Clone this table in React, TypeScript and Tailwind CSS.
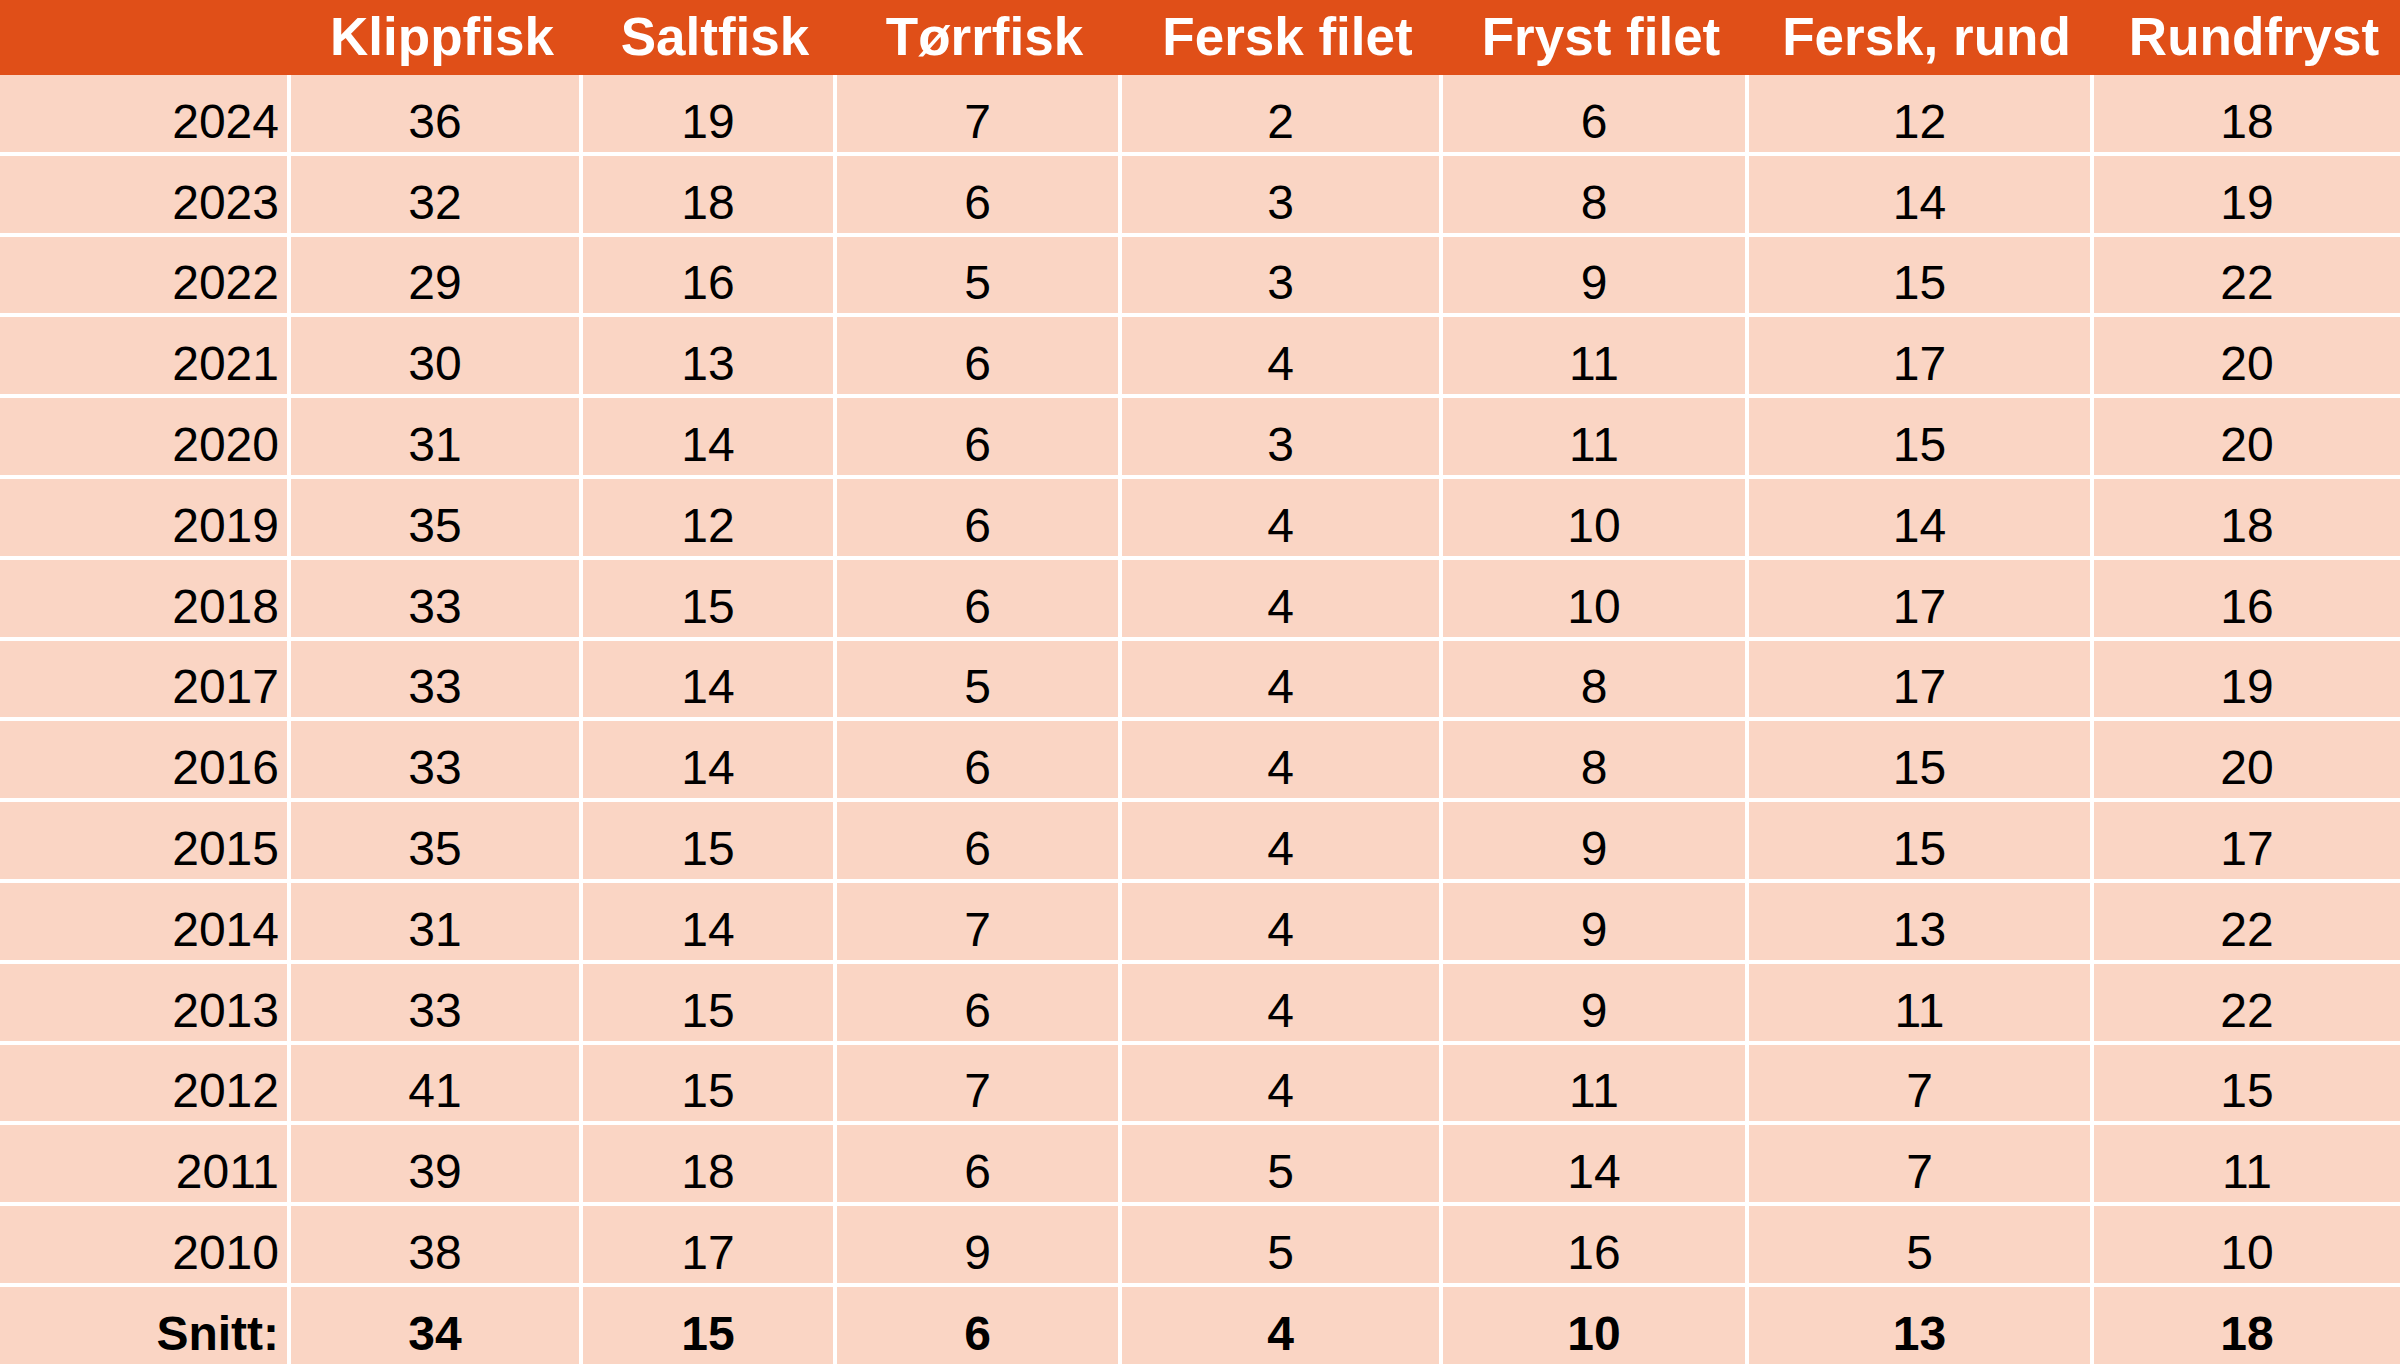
import React from 'react';

const columns = ['Klippfisk', 'Saltfisk', 'Tørrfisk', 'Fersk filet', 'Fryst filet', 'Fersk, rund', 'Rundfryst'];

const rows: [string, number[]][] = [
  ['2024', [36, 19, 7, 2, 6, 12, 18]],
  ['2023', [32, 18, 6, 3, 8, 14, 19]],
  ['2022', [29, 16, 5, 3, 9, 15, 22]],
  ['2021', [30, 13, 6, 4, 11, 17, 20]],
  ['2020', [31, 14, 6, 3, 11, 15, 20]],
  ['2019', [35, 12, 6, 4, 10, 14, 18]],
  ['2018', [33, 15, 6, 4, 10, 17, 16]],
  ['2017', [33, 14, 5, 4, 8, 17, 19]],
  ['2016', [33, 14, 6, 4, 8, 15, 20]],
  ['2015', [35, 15, 6, 4, 9, 15, 17]],
  ['2014', [31, 14, 7, 4, 9, 13, 22]],
  ['2013', [33, 15, 6, 4, 9, 11, 22]],
  ['2012', [41, 15, 7, 4, 11, 7, 15]],
  ['2011', [39, 18, 6, 5, 14, 7, 11]],
  ['2010', [38, 17, 9, 5, 16, 5, 10]],
];

const average = [34, 15, 6, 4, 10, 13, 18];

const gridCols = 'grid grid-cols-[287px_288px_250px_281px_317px_302px_341px_1fr] gap-x-[4px]';

const Row: React.FC<{ label: string; values: (number | string)[]; bold?: boolean }> = ({ label, values, bold }) => (
  <div className={`${gridCols} h-[76.8px] ${bold ? 'font-bold' : ''}`}>
    <div className="bg-[#fad5c4] flex items-end justify-end pr-[8px] pb-[6px] leading-[48px]">{label}</div>
    {values.map((v, i) => (
      <div key={i} className="bg-[#fad5c4] flex items-end justify-center pb-[6px] leading-[48px]">
        {v}
      </div>
    ))}
  </div>
);

export default function App() {
  return (
    <div className="w-[2400px] h-[1368px] overflow-hidden bg-white text-black text-[48px] font-['Liberation_Sans',Arial,sans-serif]">
      {/* header */}
      <div className={`${gridCols} h-[75px] bg-[#e04f18] text-white font-bold text-[53px] leading-[53px]`}>
        <div />
        {columns.map(c => (
          <div key={c} className="flex justify-center pt-[10px] pl-[14px] whitespace-nowrap">
            {c}
          </div>
        ))}
      </div>

      {/* body */}
      <div className="flex flex-col gap-y-[4px]">
        {rows.map(([year, vals]) => (
          <Row key={year} label={year} values={vals} />
        ))}
        <Row label="Snitt:" values={average} bold />
        <Row label="" values={['', '', '', '', '', '', '']} />
      </div>
    </div>
  );
}
